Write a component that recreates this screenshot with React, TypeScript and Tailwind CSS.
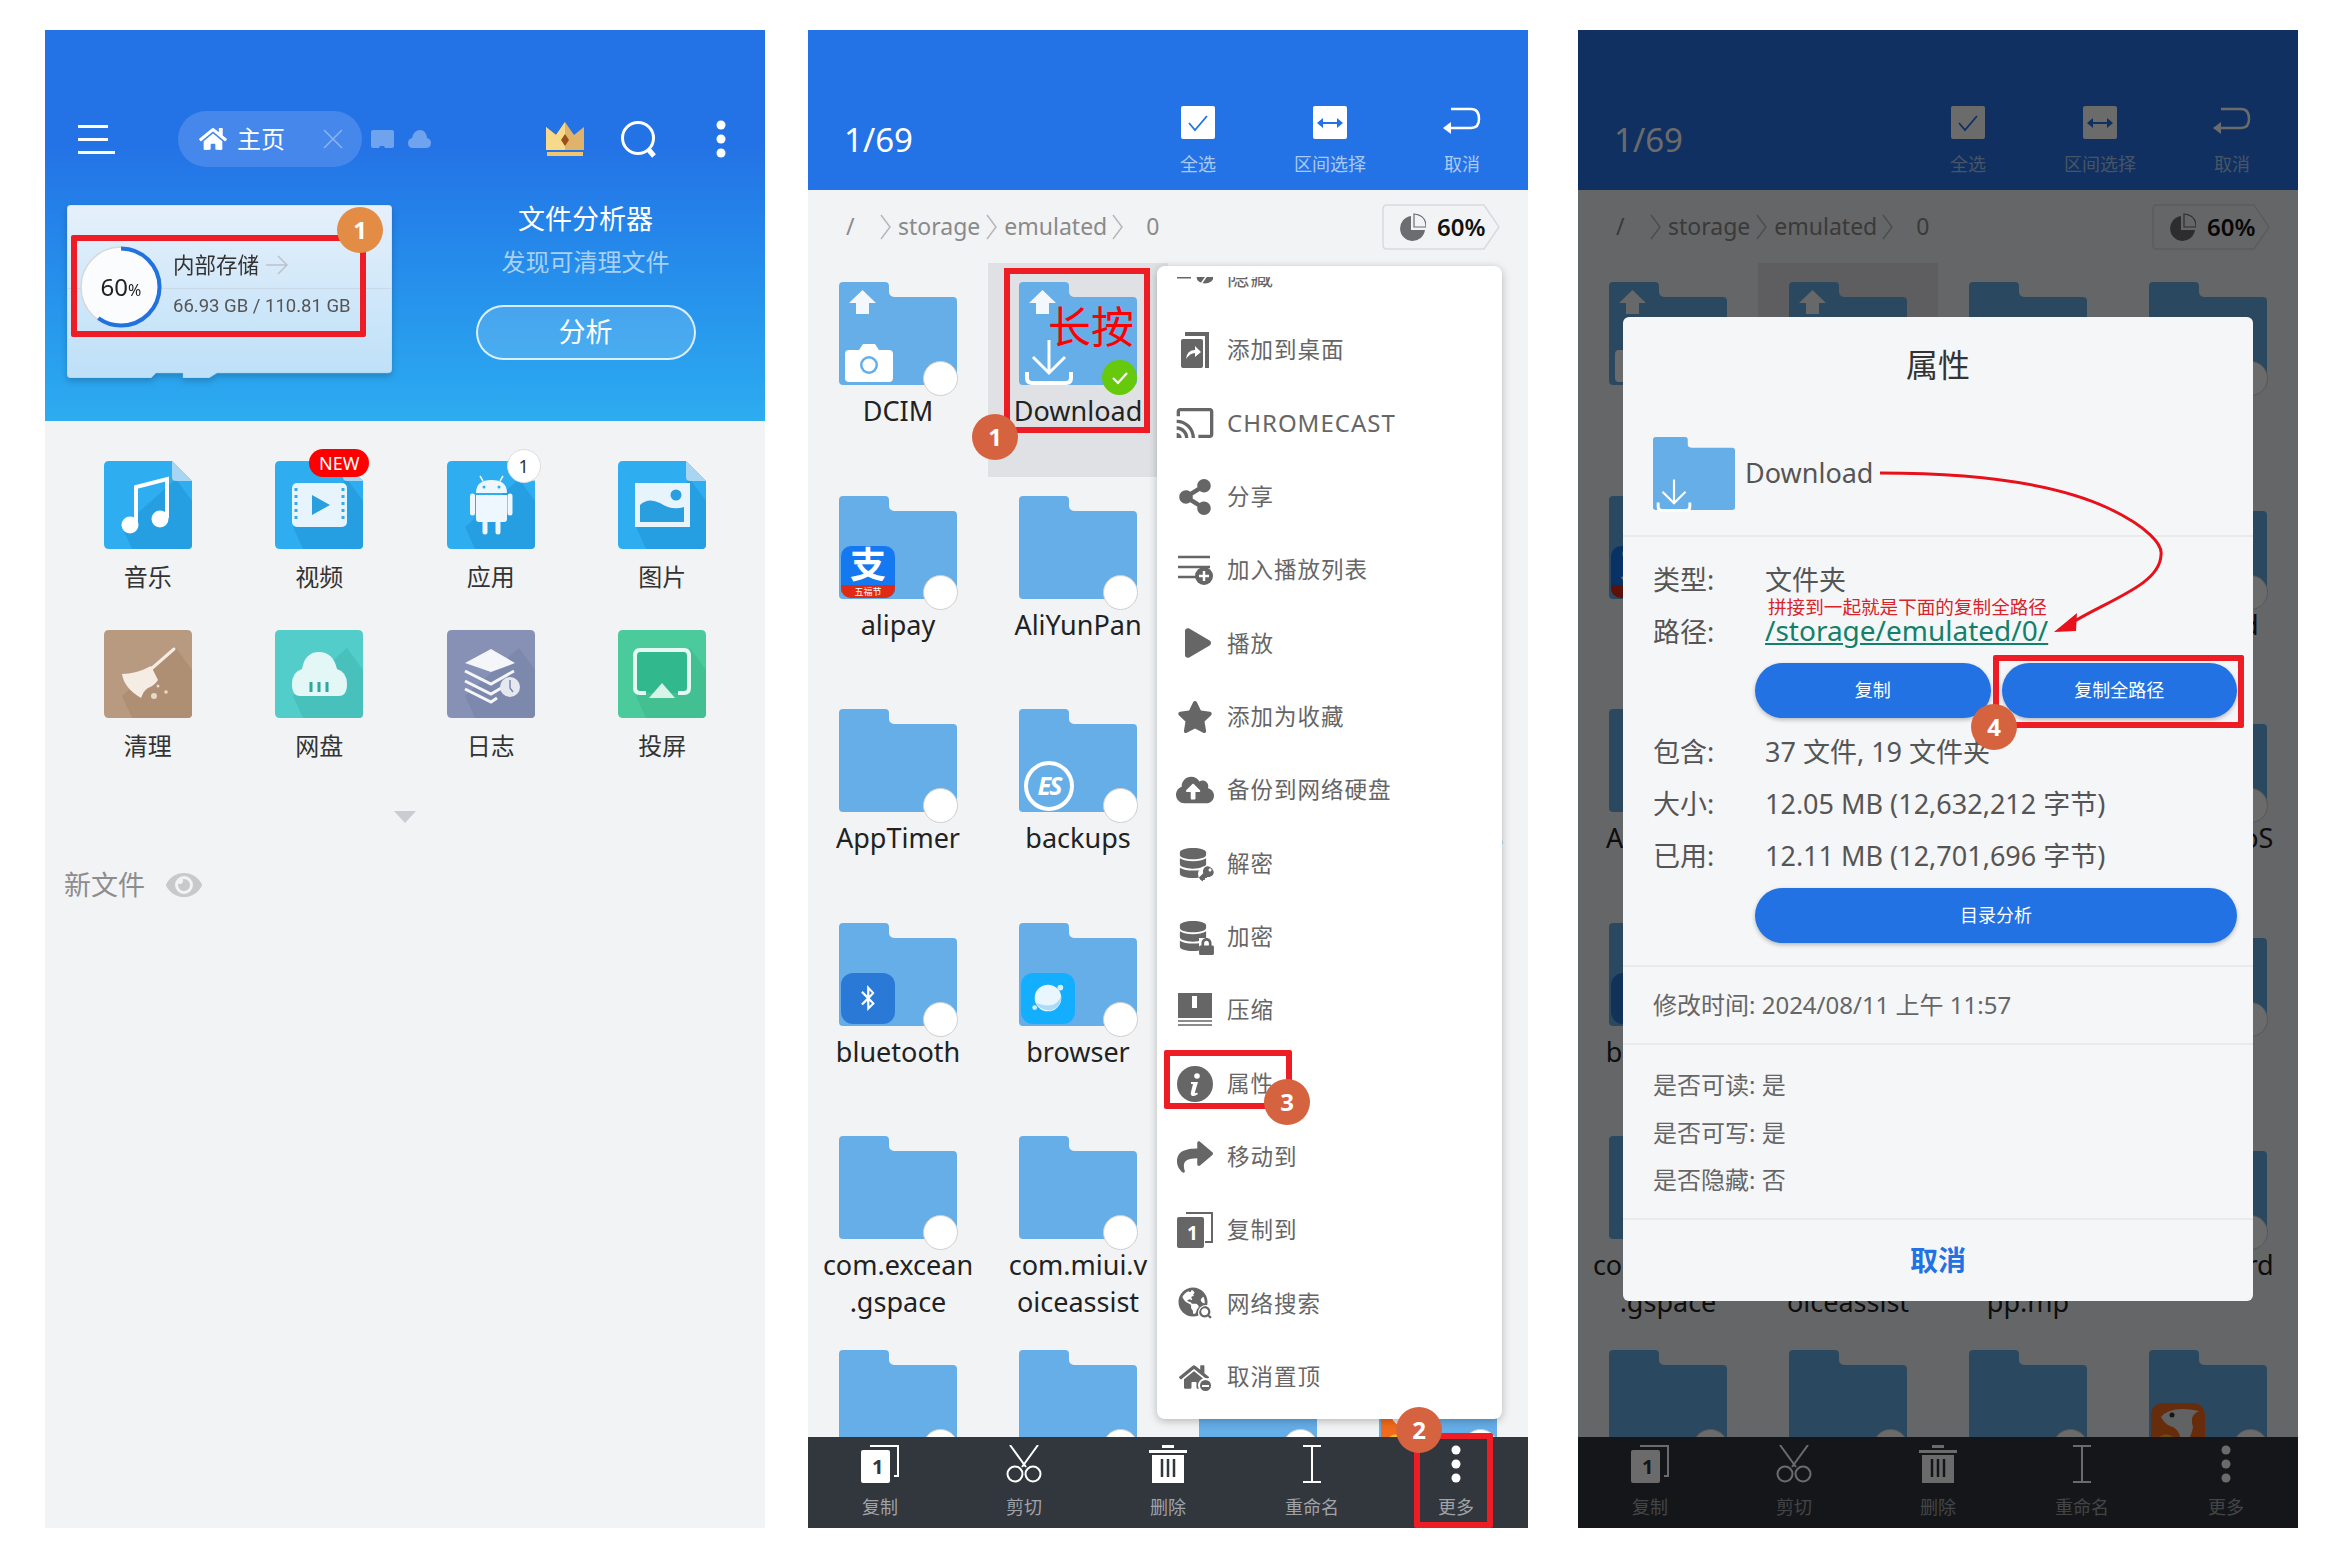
import type { ReactNode } from 'react';
import {
  FaCloudUploadAlt,
  FaDatabase,
  FaEye,
  FaGlobeAmericas,
  FaHome,
  FaKey,
  FaLock,
  FaPlay,
  FaSearch,
  FaShare,
  FaShareAlt,
  FaStar,
  FaBluetoothB,
} from 'react-icons/fa';
import { MdCast } from 'react-icons/md';

const RED = 'border-[#ee1c25]';

function Badge({ n, className }: { n: number; className: string }) {
  return (
    <div
      className={`absolute flex h-[46px] w-[46px] -translate-x-1/2 -translate-y-1/2 items-center justify-center rounded-full bg-[#d6633f] text-[24px] font-bold text-white ${className}`}
    >
      {n}
    </div>
  );
}

function Folder({ w = 118, h = 103 }: { w?: number; h?: number }) {
  return (
    <svg width={w} height={h} viewBox="0 0 118 103" preserveAspectRatio="none" className="block">
      <path
        d="M4 0H46a4 4 0 0 1 4 4V10a5 5 0 0 0 5 5H114a4 4 0 0 1 4 4V99a4 4 0 0 1-4 4H4a4 4 0 0 1-4-4V4a4 4 0 0 1 4-4Z"
        fill="#65aee8"
      />
    </svg>
  );
}

function DownloadMark({ className }: { className: string }) {
  return (
    <svg viewBox="0 0 50 46" fill="none" stroke="#fff" className={className}>
      <path d="M25 0V33M9 17L25 33L41 17" strokeWidth="3" />
      <path d="M3 32V38Q3 43 8 43H42Q47 43 47 38V32" strokeWidth="4" />
    </svg>
  );
}

type FolderItem = { name?: string; badge?: ReactNode; up?: boolean; selected?: boolean };

const upArrow = (
  <svg viewBox="0 0 27 24" className="absolute left-[10px] top-[8px] h-[24px] w-[27px]">
    <path d="M13.5 0L27 13H20V24H7V13H0Z" fill="#f2f8fd" />
  </svg>
);

const items: FolderItem[] = [
  {
    name: 'DCIM',
    up: true,
    badge: (
      <svg viewBox="0 0 48 38" className="absolute left-[6px] top-[62px] h-[38px] w-[48px]">
        <path d="M4 6H14L18 0H30L34 6H44Q48 6 48 10V34Q48 38 44 38H4Q0 38 0 34V10Q0 6 4 6Z" fill="#fff" />
        <circle cx="24" cy="21" r="9" fill="#65aee8" />
        <circle cx="24" cy="21" r="6.5" fill="#fff" />
      </svg>
    ),
  },
  { name: 'Download', up: true, selected: true, badge: <DownloadMark className="absolute left-[5px] top-[58px] h-[46px] w-[50px]" /> },
  {},
  {},
  {
    name: 'alipay',
    badge: (
      <div className="absolute left-[2px] top-[50px] flex h-[52px] w-[54px] flex-col overflow-hidden rounded-[10px] bg-[#1478f0]">
        <div className="flex h-[39px] items-center justify-center text-[36px] font-bold leading-none text-white">支</div>
        <div className="flex flex-1 items-center justify-center bg-[#e02a14] text-[9px] leading-none text-white">五福节</div>
      </div>
    ),
  },
  { name: 'AliYunPan' },
  {},
  { name: 'Android' },
  { name: 'AppTimer' },
  {
    name: 'backups',
    badge: (
      <div className="absolute left-[5px] top-[52px] flex h-[50px] w-[50px] items-center justify-center rounded-full border-[4px] border-white text-[25px] font-bold italic tracking-[-2px] text-white">
        ES
      </div>
    ),
  },
  {},
  { name: 'TencentoS' },
  {
    name: 'bluetooth',
    badge: (
      <div className="absolute left-[2px] top-[50px] flex h-[51px] w-[54px] items-center justify-center rounded-[12px] bg-[#2a79d6] text-[26px] text-white">
        <FaBluetoothB />
      </div>
    ),
  },
  {
    name: 'browser',
    badge: (
      <div className="absolute left-[2px] top-[50px] flex h-[51px] w-[54px] items-center justify-center rounded-[12px] bg-[#14aeff]">
        <svg viewBox="0 0 40 40" className="h-[38px] w-[38px]">
          <circle cx="20" cy="20" r="14" fill="#eaf6fd" />
          <path d="M6 24Q12 34 24 33Q34 30 34 18Q30 28 20 28Q12 28 6 24Z" fill="#a9dcf8" />
          <circle cx="33" cy="9" r="3" fill="#d6effc" />
          <circle cx="6" cy="30" r="2.500" fill="#d6effc" />
        </svg>
      </div>
    ),
  },
  {},
  {},
  { name: 'com.excean\n.gspace' },
  { name: 'com.miui.v\noiceassist' },
  { name: 'com.ss.a\npp.mp' },
  { name: 'Smartcard' },
  {},
  {},
  {},
  {
    badge: (
      <div className="absolute left-[2px] top-[53px] h-[51px] w-[54px] overflow-hidden rounded-[12px] bg-[#f26a1b]">
        <svg viewBox="0 0 54 51" className="h-full w-full">
          <path d="M10 14Q20 2 48 8Q38 12 42 24Q40 38 30 42Q30 28 22 24Q14 22 10 14Z" fill="#e8eaec" />
          <circle cx="21" cy="12" r="2.500" fill="#333" />
          <path d="M8 34Q18 26 30 42L22 48Z" fill="#f5b731" />
        </svg>
      </div>
    ),
  },
];

function FileCell({ item }: { item: FolderItem }) {
  return (
    <div className={`flex flex-col items-center pt-[19px] ${item.selected ? 'bg-[#dfe1e4]' : ''}`}>
      <div className="relative h-[103px] w-[118px]">
        <Folder />
        {item.up && upArrow}
        {item.badge}
        {item.selected ? (
          <div className="absolute left-[83px] top-[78px] flex h-[35px] w-[35px] items-center justify-center rounded-full bg-[#66c90b]">
            <svg viewBox="0 0 20 20" className="h-[20px] w-[20px]" fill="none" stroke="#fff" strokeWidth="2.2">
              <path d="M3 10L8 15L17 5" />
            </svg>
          </div>
        ) : (
          <div className="absolute left-[84px] top-[79px] h-[35px] w-[35px] rounded-full border-[1.5px] border-[#cfcfcf] bg-white" />
        )}
      </div>
      {item.name && (
        <div className="mt-[7px] whitespace-pre-line text-center text-[27px] leading-[37px] text-[#222]">{item.name}</div>
      )}
    </div>
  );
}

function Chevron() {
  return (
    <svg viewBox="0 0 11 26" className="h-[26px] w-[11px]" fill="none" stroke="#b5b7ba" strokeWidth="1.5">
      <path d="M1 1L10 13L1 25" />
    </svg>
  );
}

function HeaderAction({ icon, label }: { icon: ReactNode; label: string }) {
  return (
    <div className="flex w-[132px] flex-col items-center">
      <div className="flex h-[33px] items-center justify-center">{icon}</div>
      <div className="mt-[13px] text-[18px] leading-[24px] text-[#a9c9f3]">{label}</div>
    </div>
  );
}

function BarAction({ icon, label }: { icon: ReactNode; label: string }) {
  return (
    <div className="flex flex-col items-center pt-[8px]">
      <div className="flex h-[38px] items-center justify-center">{icon}</div>
      <div className="mt-[12px] text-[18px] leading-[24px] text-[#a0a3a7]">{label}</div>
    </div>
  );
}

function FileScreen() {
  return (
    <div className="flex h-full flex-col bg-[#f1f3f5]">
      <div className="flex h-[160px] shrink-0 bg-[#2473e6] pt-[76px]">
        <div className="flex h-[66px] flex-1 items-center pl-[36px] pt-[2px] text-[33px] text-white">1/69</div>
        <HeaderAction
          label="全选"
          icon={
            <div className="flex h-[33px] w-[34px] items-center justify-center rounded-[2px] bg-white">
              <svg viewBox="0 0 20 20" className="h-[20px] w-[20px]" fill="none" stroke="#2473e6" strokeWidth="1.8">
                <path d="M1 10L7 17L19 3" />
              </svg>
            </div>
          }
        />
        <HeaderAction
          label="区间选择"
          icon={
            <div className="flex h-[33px] w-[34px] items-center justify-center rounded-[2px] bg-white">
              <svg viewBox="0 0 26 12" className="w-[26px]" fill="#2473e6">
                <path d="M0 6L6 1V5H20V1L26 6L20 11V7H6V11Z" />
              </svg>
            </div>
          }
        />
        <HeaderAction
          label="取消"
          icon={
            <svg viewBox="0 0 38 33" className="h-[33px] w-[38px]" fill="none" stroke="#fff" strokeWidth="2.5">
              <path d="M6 22H28Q36 22 36 13Q36 3 28 3H8" />
              <path d="M0 22L8 16V28Z" fill="#fff" stroke="none" />
            </svg>
          }
        />
      </div>

      <div className="flex h-[73px] shrink-0 items-center pl-[38px] pr-[28px] text-[23px] text-[#8a8a8a]">
        <span className="w-[34px]">/</span>
        <Chevron />
        <span className="ml-[7px]">storage</span>
        <span className="ml-[6px]">
          <Chevron />
        </span>
        <span className="ml-[7px]">emulated</span>
        <span className="ml-[5px]">
          <Chevron />
        </span>
        <span className="ml-[23px]">0</span>
        <div className="relative ml-auto flex h-[46px] w-[118px] items-center pl-[18px]">
          <svg viewBox="0 0 118 46" className="absolute inset-0 h-full w-full" fill="none" stroke="#d8dadd" strokeWidth="1.5">
            <path d="M5 1H102L117 23L102 45H5Q1 45 1 41V5Q1 1 5 1Z" />
          </svg>
          <svg viewBox="0 0 26 28" className="relative h-[28px] w-[26px]">
            <path d="M11 3A12.5 12.5 0 1 0 25 17H11Z" fill="#6b6d70" />
            <path d="M14 1V14H26Q26 2 14 1Z" fill="#f1f3f5" stroke="#6b6d70" strokeWidth="1.2" />
          </svg>
          <span className="relative ml-[11px] text-[24px] font-semibold text-[#111]">60%</span>
        </div>
      </div>

      <div className="min-h-0 flex-1 overflow-hidden">
        <div className="grid grid-cols-4 auto-rows-[213.5px]">
          {items.map((item, i) => (
            <FileCell key={i} item={item} />
          ))}
        </div>
      </div>

      <div className="grid h-[91px] shrink-0 grid-cols-5 bg-[#32363d]">
        <BarAction
          label="复制"
          icon={
            <svg viewBox="0 0 38 38" className="h-[38px] w-[38px]">
              <path d="M9 1H37V31H33" fill="none" stroke="#fff" strokeWidth="2" />
              <rect x="0" y="5" width="29" height="33" rx="2" fill="#fff" />
              <text x="11" y="29" fontSize="20" fontWeight="700" fill="#32363d">1</text>
            </svg>
          }
        />
        <BarAction
          label="剪切"
          icon={
            <svg viewBox="0 0 36 38" className="h-[38px] w-[36px]" fill="none" stroke="#fff" strokeWidth="2">
              <path d="M4 0L20 22M32 0L16 22" />
              <circle cx="9" cy="29" r="7.5" />
              <circle cx="27" cy="29" r="7.5" />
            </svg>
          }
        />
        <BarAction
          label="删除"
          icon={
            <svg viewBox="0 0 38 38" className="h-[38px] w-[38px]">
              <path d="M13 0H25V3H13ZM0 5H38V8H0ZM3 10H35V38H3Z" fill="#fff" />
              <path d="M13 14V32M19 14V32M25 14V32" stroke="#32363d" strokeWidth="2.5" />
            </svg>
          }
        />
        <BarAction
          label="重命名"
          icon={
            <svg viewBox="0 0 18 38" className="h-[38px] w-[18px]" fill="none" stroke="#fff" strokeWidth="2">
              <path d="M0 1H18M9 1V37M0 37H18" />
            </svg>
          }
        />
        <BarAction
          label="更多"
          icon={
            <svg viewBox="0 0 10 38" className="h-[38px] w-[10px]" fill="#fff">
              <circle cx="5" cy="5" r="4.5" />
              <circle cx="5" cy="19" r="4.5" />
              <circle cx="5" cy="33" r="4.5" />
            </svg>
          }
        />
      </div>
    </div>
  );
}

function DocIcon({
  bg,
  shade,
  fold,
  children,
}: {
  bg: string;
  shade: string;
  fold?: boolean;
  children: ReactNode;
}) {
  return (
    <svg viewBox="0 0 88 88" className="h-[88px] w-[88px]">
      <path
        d={fold ? 'M5 0H68L88 20V83Q88 88 83 88H5Q0 88 0 83V5Q0 0 5 0Z' : 'M5 0H83Q88 0 88 5V83Q88 88 83 88H5Q0 88 0 83V5Q0 0 5 0Z'}
        fill={bg}
      />
      <path d="M18 66L28 88H84Q88 88 88 84V40L72 18Z" fill={shade} />
      {fold && <path d="M68 0L88 20H72Q68 20 68 16Z" fill="#a9d4f2" />}
      {children}
    </svg>
  );
}

const BLUE = '#2eaef0';
const BLUE_SHADE = '#259fe2';

const categories: { label: string; overlay?: ReactNode; icon: ReactNode }[] = [
  {
    label: '音乐',
    icon: (
      <DocIcon bg={BLUE} shade={BLUE_SHADE} fold>
        <path d="M32 62V26L63 18V57" fill="none" stroke="#fff" strokeWidth="4" />
        <circle cx="26" cy="64" r="8.5" fill="#fff" />
        <circle cx="56" cy="58" r="8.5" fill="#fff" />
      </DocIcon>
    ),
  },
  {
    label: '视频',
    overlay: (
      <div className="absolute left-[34px] top-[-12px] flex h-[28px] w-[60px] items-center justify-center rounded-full bg-[#f00] text-[18px] text-white">
        NEW
      </div>
    ),
    icon: (
      <DocIcon bg={BLUE} shade={BLUE_SHADE} fold>
        <rect x="17" y="22" width="55" height="44" rx="5" fill="#e8f4fc" />
        <path d="M37 34L55 44L37 54Z" fill="#2a9fe0" />
        <path d="M21 27V61M68 27V61" stroke={BLUE} strokeWidth="3" strokeDasharray="3 4" />
      </DocIcon>
    ),
  },
  {
    label: '应用',
    overlay: (
      <div className="absolute left-[60px] top-[-12px] flex h-[34px] w-[34px] items-center justify-center rounded-full border border-[#ddd] bg-white text-[18px] text-[#333]">
        1
      </div>
    ),
    icon: (
      <DocIcon bg={BLUE} shade={BLUE_SHADE} fold>
        <path d="M29 32Q29 19 44.500 19Q60 19 60 32Z" fill="#eef7fd" />
        <path d="M29 34H60V58Q60 61 57 61H32Q29 61 29 58Z" fill="#eef7fd" />
        <path d="M25.500 35V52M63 35V52M38 60V71M51 60V71" stroke="#eef7fd" strokeWidth="5" strokeLinecap="round" />
        <path d="M36 20L33 15M53 20L56 15" stroke="#eef7fd" strokeWidth="1.5" />
        <circle cx="37" cy="26" r="1.5" fill={BLUE} />
        <circle cx="52" cy="26" r="1.5" fill={BLUE} />
      </DocIcon>
    ),
  },
  {
    label: '图片',
    icon: (
      <DocIcon bg={BLUE} shade={BLUE_SHADE} fold>
        <rect x="17" y="22" width="55" height="44" fill="#e8f4fc" />
        <circle cx="58" cy="34" r="5.500" fill="#2a9fe0" />
        <path d="M22 61V44Q30 36 42 42Q54 50 66 46V61Z" fill="#2a9fe0" />
      </DocIcon>
    ),
  },
  {
    label: '清理',
    icon: (
      <DocIcon bg="#b89a80" shade="#ae8f74">
        <path d="M70 19L46 40" stroke="#f5ece4" strokeWidth="3" strokeLinecap="round" />
        <path d="M47 36Q32 44 18 44Q20 58 37 68Q40 60 44 58Q50 56 54 50Z" fill="#f5ece4" />
        <circle cx="50" cy="66" r="3" fill="#e8d8c8" />
        <circle cx="62" cy="62" r="1.800" fill="#e8d8c8" />
        <circle cx="54" cy="56" r="1.500" fill="#e8d8c8" />
      </DocIcon>
    ),
  },
  {
    label: '网盘',
    icon: (
      <DocIcon bg="#53cdc9" shade="#48c0bc">
        <path d="M25 66Q17 66 17 54Q17 42 27 39Q30 22 44 22Q58 22 62 39Q72 42 72 54Q72 66 64 66Z" fill="#e2f7f6" />
        <path d="M36 52V62M44 52V62M52 52V62" stroke="#2fa8a0" strokeWidth="3" />
      </DocIcon>
    ),
  },
  {
    label: '日志',
    icon: (
      <DocIcon bg="#8691b5" shade="#7c88ac">
        <path d="M44 19L68 33L44 42L18 33Z" fill="#f5f6f9" />
        <path d="M18 41L44 54L67 41M18 51L44 64L56 57M18 59L44 72L50 68" fill="none" stroke="#f5f6f9" strokeWidth="3" />
        <circle cx="63" cy="57" r="10" fill="#e6e8ef" />
        <path d="M63 50V58L66 62" fill="none" stroke="#7c88ac" strokeWidth="1.500" />
      </DocIcon>
    ),
  },
  {
    label: '投屏',
    icon: (
      <DocIcon bg="#4bcb9c" shade="#43c092">
        <path d="M28 63H22Q17 63 17 58V26Q17 20 22 20H66Q71 20 71 26V58Q71 63 66 63H60" fill="#31b88d" stroke="#e6f8f2" strokeWidth="4" />
        <path d="M44 53L57 68H31Z" fill="#d7f3ea" />
      </DocIcon>
    ),
  },
];

function CardShape() {
  return (
    <svg viewBox="0 0 325 173" className="absolute inset-0 h-full w-full">
      <defs>
        <linearGradient id="card" x1="0" y1="0" x2="0" y2="1">
          <stop offset="0" stopColor="#e6f0fb" />
          <stop offset="1" stopColor="#bde0f8" />
        </linearGradient>
      </defs>
      <path
        d="M4 0H321Q325 0 325 4V164Q325 168 321 168H150L142 173H116V168H89L84 173H4Q0 173 0 169V4Q0 0 4 0Z"
        fill="url(#card)"
        stroke="#9cc5e8"
        strokeWidth="0.5"
      />
    </svg>
  );
}

function HomeScreen() {
  return (
    <div className="flex h-full flex-col bg-[#f1f3f5]">
      <div className="h-[391px] shrink-0 bg-gradient-to-b from-[#2473e6] from-[30%] to-[#2dacf0] pt-[81px]">
        <div className="flex h-[56px] items-center pl-[33px] pr-[39px]">
          <div className="flex w-[37px] flex-col gap-[10px]">
            <div className="h-[3px] w-[30px] bg-white" />
            <div className="h-[3px] w-[30px] bg-white" />
            <div className="h-[3px] w-[37px] bg-white" />
          </div>
          <div className="ml-[63px] flex h-[56px] w-[184px] items-center rounded-full bg-[#4587eb] pl-[21px] text-[24px] text-white">
            <FaHome className="h-[26px] w-[28px]" />
            <span className="ml-[10px]">主页</span>
            <svg viewBox="0 0 20 20" className="ml-[38px] h-[20px] w-[20px]" stroke="#8db4f0" strokeWidth="1.5">
              <path d="M1 1L19 19M19 1L1 19" />
            </svg>
          </div>
          <svg viewBox="0 0 23 18" className="ml-[9px] h-[18px] w-[23px]">
            <path d="M2 0H21Q23 0 23 2V16Q23 18 21 18H14L13 16H9L8 18H2Q0 18 0 16V2Q0 0 2 0Z" fill="#6fa3ee" />
          </svg>
          <svg viewBox="0 0 23 18" className="ml-[14px] h-[18px] w-[23px]">
            <path d="M5 18Q0 18 0 13Q0 9 4 8Q6 0 12 0Q18 0 19 8Q23 9 23 13Q23 18 18 18Z" fill="#6fa3ee" />
          </svg>
          <svg viewBox="0 0 38 34" className="ml-auto h-[34px] w-[38px]">
            <path d="M0 5L10 13L19 0L28 13L38 5V28H0Z" fill="#dfb36a" />
            <path d="M0 5L10 13L19 0V28H0Z" fill="#f7d98c" />
            <path d="M19 12L23 18L19 24L15 18Z" fill="#9a4f16" />
            <rect x="1" y="30" width="36" height="4" fill="#f3c56e" />
          </svg>
          <svg viewBox="0 0 38 37" className="ml-[37px] h-[37px] w-[38px]" fill="none" stroke="#fff">
            <circle cx="17" cy="17" r="15.500" strokeWidth="3" />
            <path d="M27 28L33 35" strokeWidth="5" />
          </svg>
          <svg viewBox="0 0 10 38" className="ml-[57px] h-[38px] w-[10px]" fill="#fff">
            <circle cx="5" cy="5" r="4.500" />
            <circle cx="5" cy="19" r="4.500" />
            <circle cx="5" cy="33" r="4.500" />
          </svg>
        </div>

        <div className="mt-[38px] flex pl-[22px]">
          <div className="relative h-[173px] w-[325px] shrink-0 drop-shadow-[0_3px_3px_rgba(0,0,0,0.2)]">
            <CardShape />
            <div className="absolute inset-x-0 top-[83px] h-px bg-[#c8d8e6]" />
            <div className="relative flex pl-[13px] pt-[41px]">
              <div className="relative flex h-[82px] w-[82px] items-center justify-center">
                <svg viewBox="0 0 82 82" className="absolute inset-0">
                  <circle cx="41" cy="41" r="40" fill="#fbfcfe" stroke="#d8d8d8" strokeWidth="1.500" />
                  <circle
                    cx="41"
                    cy="41"
                    r="38.500"
                    fill="none"
                    stroke="#1f72e0"
                    strokeWidth="4"
                    strokeDasharray="145 242"
                    transform="rotate(-90 41 41)"
                  />
                </svg>
                <span className="relative text-[24px] text-[#222]">
                  60<span className="text-[16px]">%</span>
                </span>
              </div>
              <div className="ml-[11px] text-[#333]">
                <div className="flex h-[38px] items-center text-[21.5px]">
                  内部存储
                  <svg viewBox="0 0 22 20" className="ml-[7px] h-[20px] w-[22px]" fill="none" stroke="#b9c2ca" strokeWidth="1.500">
                    <path d="M0 10H21M12 1L21 10L12 19" />
                  </svg>
                </div>
                <div className="mt-[3px] flex h-[40px] items-center whitespace-nowrap font-['Roboto',sans-serif] text-[18.5px] text-[#555]">
                  66.93 GB / 110.81 GB
                </div>
              </div>
            </div>
          </div>
          <div className="flex flex-1 flex-col items-center pl-[14px] text-white">
            <div className="-mt-[4px] text-[27px] leading-[36px]">文件分析器</div>
            <div className="mt-[9px] text-[24px] leading-[32px] text-[#a9d0f5]">发现可清理文件</div>
            <div className="mt-[27px] flex h-[55px] w-[220px] items-center justify-center rounded-full border-2 border-white/80 bg-white/15 text-[27px]">
              分析
            </div>
          </div>
        </div>
      </div>

      <div className="grid grid-cols-4 gap-y-[36px] px-[17px] pt-[40px]">
        {categories.map((c) => (
          <div key={c.label} className="flex flex-col items-center">
            <div className="relative h-[88px] w-[88px]">
              {c.icon}
              {c.overlay}
            </div>
            <div className="mt-[11px] text-[24px] leading-[34px] text-[#333]">{c.label}</div>
          </div>
        ))}
      </div>

      <svg viewBox="0 0 22 12" className="mx-auto mt-[48px] h-[12px] w-[22px] shrink-0">
        <path d="M0 0H22L11 12Z" fill="#c9ccd0" />
      </svg>

      <div className="mt-[44px] flex h-[36px] items-center pl-[19px] text-[27px] text-[#8d8d8d]">
        新文件
        <FaEye className="ml-[21px] h-[36px] w-[36px] text-[#c9c9c9]" />
      </div>
    </div>
  );
}

const ICON = 'h-[36px] w-[36px] text-[#666]';

function CopyToIcon() {
  return (
    <svg viewBox="0 0 36 36" className={ICON}>
      <path d="M9 1H35V30H28" fill="none" stroke="#666" strokeWidth="2" />
      <rect x="0" y="5" width="27" height="31" rx="2" fill="#666" />
      <text x="10" y="28" fontSize="19" fontWeight="700" fill="#fff">1</text>
    </svg>
  );
}

const menuRows: { label: string; icon: ReactNode }[] = [
  {
    label: '隐藏',
    icon: (
      <svg viewBox="0 0 36 14" className="w-[36px]" fill="none" stroke="#666" strokeWidth="3">
        <path d="M0 7H14" />
        <ellipse cx="28" cy="7" rx="7" ry="5" fill="#666" />
        <path d="M24 14L33 1" stroke="#fff" strokeWidth="1.500" />
      </svg>
    ),
  },
  {
    label: '添加到桌面',
    icon: (
      <svg viewBox="0 0 28 36" className="h-[36px] w-[28px]" fill="#666">
        <path d="M4 0H28V36H24V4H4Z" />
        <rect x="0" y="7" width="22" height="29" rx="2" />
        <path d="M5 27Q6 18 14 18V14L20 20L14 25V21Q9 21 5 27Z" fill="#fff" />
      </svg>
    ),
  },
  { label: 'CHROMECAST', icon: <MdCast className="h-[40px] w-[40px] text-[#666]" /> },
  { label: '分享', icon: <FaShareAlt className={ICON} /> },
  {
    label: '加入播放列表',
    icon: (
      <svg viewBox="0 0 36 30" className="h-[30px] w-[36px]">
        <path d="M1 2H33M1 12H33M1 22H19" stroke="#666" strokeWidth="2.500" />
        <circle cx="27" cy="21" r="9" fill="#666" />
        <path d="M22 21H32M27 16V26" stroke="#fff" strokeWidth="2.500" />
      </svg>
    ),
  },
  { label: '播放', icon: <FaPlay className="ml-[6px] h-[30px] w-[26px] text-[#666]" /> },
  { label: '添加为收藏', icon: <FaStar className={ICON} /> },
  { label: '备份到网络硬盘', icon: <FaCloudUploadAlt className="h-[38px] w-[38px] text-[#666]" /> },
  {
    label: '解密',
    icon: (
      <span className="relative block h-[32px] w-[34px]">
        <FaDatabase className="h-[30px] w-[30px] text-[#666]" />
        <FaKey className="absolute bottom-[-2px] right-[-2px] h-[16px] w-[16px] rounded-full bg-white text-[#666]" />
      </span>
    ),
  },
  {
    label: '加密',
    icon: (
      <span className="relative block h-[32px] w-[34px]">
        <FaDatabase className="h-[30px] w-[30px] text-[#666]" />
        <FaLock className="absolute bottom-[-2px] right-[-2px] h-[17px] w-[15px] bg-white text-[#666]" />
      </span>
    ),
  },
  {
    label: '压缩',
    icon: (
      <svg viewBox="0 0 34 34" className="h-[34px] w-[34px]">
        <rect x="0" y="0" width="34" height="25" fill="#666" />
        <path d="M0 28H34M0 32H34" stroke="#666" strokeWidth="1.500" />
        <rect x="14" y="3" width="5" height="12" fill="#fff" />
      </svg>
    ),
  },
  {
    label: '属性',
    icon: (
      <svg viewBox="0 0 36 36" className={ICON}>
        <circle cx="18" cy="18" r="18" fill="#666" />
        <circle cx="20" cy="10" r="2.800" fill="#fff" />
        <path d="M14 16H21L18 26Q17.500 28 20 26.500L21 28Q17 31 14.500 29.500Q13 28.500 14 26L16 18H14Z" fill="#fff" />
      </svg>
    ),
  },
  { label: '移动到', icon: <FaShare className={ICON} /> },
  { label: '复制到', icon: <CopyToIcon /> },
  {
    label: '网络搜索',
    icon: (
      <span className="relative block h-[34px] w-[34px]">
        <FaGlobeAmericas className="h-[30px] w-[30px] text-[#666]" />
        <FaSearch className="absolute bottom-0 right-[-2px] h-[16px] w-[16px] rounded-full bg-white p-[1px] text-[#666]" />
      </span>
    ),
  },
  {
    label: '取消置顶',
    icon: (
      <span className="relative block h-[28px] w-[32px]">
        <FaHome className="h-[28px] w-[30px] text-[#666]" />
        <span className="absolute bottom-[-2px] right-[-2px] flex h-[15px] w-[15px] items-center justify-center rounded-full border-2 border-white bg-[#666]">
          <span className="h-[2px] w-[7px] bg-white" />
        </span>
      </span>
    ),
  },
];

function ActionMenu() {
  return (
    <div className="absolute left-[349px] top-[236px] h-[1153px] w-[345px] rounded-[8px] bg-white pt-[11px] shadow-[0_2px_8px_rgba(0,0,0,0.25)]">
      <div className="h-[1130px] overflow-hidden">
        <div className="-mt-[37px]">
          {menuRows.map((row) => (
            <div key={row.label} className="flex h-[73.36px] items-center">
              <div className="flex w-[70px] shrink-0 items-center justify-center pl-[6px]">{row.icon}</div>
              <div className={`tracking-[1px] text-[#666] ${row.label === 'CHROMECAST' ? 'text-[24px]' : 'text-[22.5px]'}`}>{row.label}</div>
            </div>
          ))}
        </div>
      </div>
    </div>
  );
}

function PropRow({ label, children, top }: { label: string; children: ReactNode; top?: string }) {
  return (
    <div className={`flex h-[52px] items-center pl-[30px] text-[27px] text-[#555] ${top ?? ''}`}>
      <div className="w-[112px] shrink-0">{label}</div>
      <div>{children}</div>
    </div>
  );
}

function BlueButton({ label, className = '' }: { label: string; className?: string }) {
  return (
    <div
      className={`flex h-[55px] items-center justify-center rounded-full bg-[#2272e3] text-[18px] text-white shadow-[0_2px_4px_rgba(0,0,0,0.25)] ${className}`}
    >
      {label}
    </div>
  );
}

function PropertiesDialog() {
  return (
    <div className="absolute left-[45px] top-[287px] flex h-[984px] w-[630px] flex-col rounded-[6px] bg-[#f5f6f8]">
      <div className="flex h-[95px] shrink-0 items-center justify-center text-[32px] text-[#333]">属性</div>
      <div className="flex h-[125px] shrink-0 border-b-2 border-[#e9eaec] pl-[30px] pt-[25px]">
        <div className="relative h-[73px] w-[82px]">
          <Folder w={82} h={73} />
          <DownloadMark className="absolute bottom-[-4px] left-[3px] h-[36px] w-[36px]" />
        </div>
        <div className="ml-[10px] flex h-[73px] items-center text-[27px] text-[#555]">Download</div>
      </div>

      <div className="shrink-0 border-b-2 border-[#e9eaec] pb-[22px] pt-[17px]">
        <PropRow label="类型:">文件夹</PropRow>
        <PropRow label="路径:">
          <span className="block -translate-y-[2px] text-[28px] text-[#12806a] underline">/storage/emulated/0/</span>
        </PropRow>
        <div className="ml-[132px] mr-[16px] mt-[5px] flex gap-[11px]">
          <BlueButton label="复制" className="flex-1" />
          <BlueButton label="复制全路径" className="flex-1" />
        </div>
        <PropRow label="包含:" top="mt-[8px]">37 文件, 19 文件夹</PropRow>
        <PropRow label="大小:">12.05 MB (12,632,212 字节)</PropRow>
        <PropRow label="已用:">12.11 MB (12,701,696 字节)</PropRow>
        <div className="ml-[132px] mr-[16px] mt-[6px]">
          <BlueButton label="目录分析" />
        </div>
      </div>

      <div className="flex h-[78px] shrink-0 items-center border-b-2 border-[#e9eaec] pl-[30px] text-[24px] text-[#666]">
        修改时间: 2024/08/11 上午 11:57
      </div>

      <div className="shrink-0 border-b-2 border-[#e9eaec] pb-[14px] pt-[16px] text-[24px] leading-[47.5px] text-[#666]">
        <div className="pl-[30px]">是否可读: 是</div>
        <div className="pl-[30px]">是否可写: 是</div>
        <div className="pl-[30px]">是否隐藏: 否</div>
      </div>

      <div className="flex flex-1 items-center justify-center text-[28px] font-bold text-[#2272e3]">取消</div>
    </div>
  );
}

function Phone({ children }: { children: ReactNode }) {
  return <div className="relative h-[1498px] w-[720px] shrink-0 overflow-hidden">{children}</div>;
}

export default function App() {
  return (
    <div className="flex min-h-[1559px] bg-white pl-[45px] pt-[30px] font-['Noto_Sans','Noto_Sans_CJK_SC',sans-serif]">
      <Phone>
        <HomeScreen />
        <div className={`absolute left-[26px] top-[205px] h-[102px] w-[295px] rounded-[2px] border-[6px] ${RED}`} />
        <Badge n={1} className="left-[315px] top-[200px] bg-[#e38c45]" />
      </Phone>

      <div className="ml-[43px]">
        <Phone>
          <FileScreen />
          <div className="absolute left-[240px] top-[275px] text-[43px] leading-[44px] text-[#f00]">长按</div>
          <div className={`absolute left-[196px] top-[238px] h-[165px] w-[146px] border-[6px] ${RED}`} />
          <Badge n={1} className="left-[187px] top-[407px]" />
          <ActionMenu />
          <div className={`absolute left-[356px] top-[1020px] h-[59px] w-[128px] rounded-[2px] border-[6px] ${RED}`} />
          <Badge n={3} className="left-[479px] top-[1072px]" />
          <div className={`absolute left-[606px] top-[1403px] h-[95px] w-[79px] rounded-[2px] border-[6px] ${RED}`} />
          <Badge n={2} className="left-[611px] top-[1400px]" />
        </Phone>
      </div>

      <div className="ml-[50px]">
        <Phone>
          <FileScreen />
          <div className="absolute inset-0 bg-black/58" />
          <PropertiesDialog />
          <svg viewBox="0 0 720 1498" className="absolute inset-0 h-full w-full" fill="none">
            <path
              d="M302 443C380 443 470 450 530 478C570 497 585 515 583 525C582 555 530 570 490 595"
              stroke="#e8101a"
              strokeWidth="3"
            />
            <path d="M476 602L499 583L498 601Z" fill="#e8101a" />
          </svg>
          <div className="absolute left-[190px] top-[565px] whitespace-nowrap text-[18.6px] leading-[24px] text-[#d8232a]">
            拼接到一起就是下面的复制全路径
          </div>
          <div className={`absolute left-[415px] top-[625px] h-[73px] w-[251px] rounded-[2px] border-[6px] ${RED}`} />
          <Badge n={4} className="left-[416px] top-[697px]" />
        </Phone>
      </div>
    </div>
  );
}
